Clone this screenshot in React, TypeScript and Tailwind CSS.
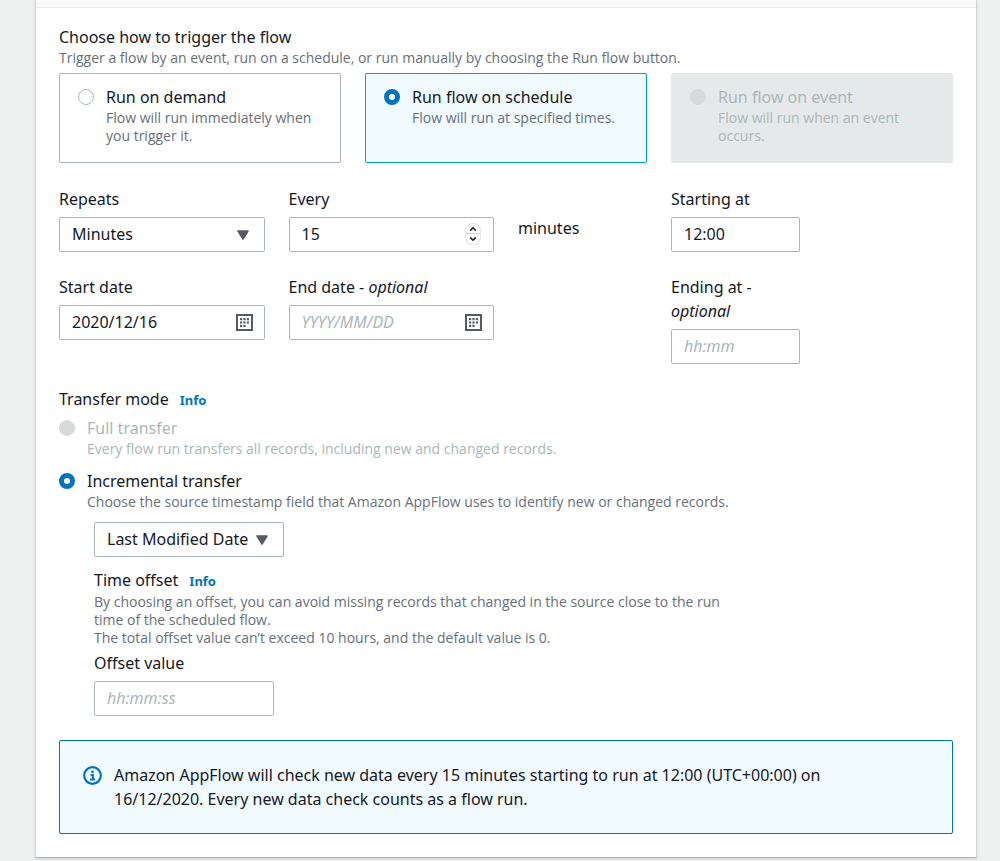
import React, { useState } from 'react';

const inputClass =
  'h-[35px] w-full min-w-0 rounded-xs border border-[#aab7b8] bg-white px-3 pb-0.5 text-[#16191f] outline-none placeholder:italic placeholder:text-[#aab7b8] focus:border-[#00a1c9]';

const hintClass = "font-['Open_Sans',sans-serif] text-sm leading-[18px]";

const CalendarIcon: React.FC = () => (
  <svg viewBox="0 0 17 17" className="h-[17px] w-[17px]" fill="none" aria-hidden="true">
    <rect x="1" y="1" width="15" height="15" stroke="#545b64" strokeWidth="2" />
    <path
      d="M4 4h2.2v2.2H4zM7.4 4h2.2v2.2H7.4zM10.8 4H13v2.2h-2.2zM4 7.4h2.2v2.2H4zM7.4 7.4h2.2v2.2H7.4zM10.8 7.4H13v2.2h-2.2zM4 10.8h2.2V13H4zM7.4 10.8h2.2V13H7.4z"
      fill="#545b64"
    />
  </svg>
);

const InfoIcon: React.FC = () => (
  <svg viewBox="0 0 16 16" className="h-[19px] w-[19px]" fill="none" stroke="#0073bb" aria-hidden="true">
    <circle cx="8" cy="8" r="7" strokeWidth="1.8" />
    <path d="M6 11.3h4.2M6.4 7.5h1.9v3.8" strokeWidth="1.7" />
    <path d="M7 4.9h2" strokeWidth="1.9" />
  </svg>
);

const InfoLink: React.FC = () => (
  <a href="#info" className="ml-[11px] text-[13px] font-bold text-[#0073bb] hover:underline">
    Info
  </a>
);

interface RadioProps extends React.InputHTMLAttributes<HTMLInputElement> {
  label: string;
  description: string;
}

const Radio: React.FC<RadioProps> = ({ label, description, disabled, ...props }) => (
  <label className="flex items-start">
    <input
      type="radio"
      disabled={disabled}
      className="mt-1 mr-3 h-4 w-4 shrink-0 appearance-none rounded-full border border-[#aab7b8] bg-white checked:border-5 checked:border-[#0073bb] disabled:border-[#d5dbdb] disabled:bg-[#d5dbdb]"
      {...props}
    />
    <span className={disabled ? 'text-[#aab7b8]' : 'text-[#16191f]'}>
      <span className="block">{label}</span>
      <span className={`block ${hintClass} ${disabled ? '' : 'text-[#687078]'}`}>{description}</span>
    </span>
  </label>
);

interface FieldProps {
  id: string;
  label: string;
  optional?: boolean;
  className?: string;
  children: React.ReactNode;
}

const Field: React.FC<FieldProps> = ({ id, label, optional, className, children }) => (
  <div className={className}>
    <label htmlFor={id} className="mb-1.5 block">
      {label}
      {optional && (
        <>
          {' - '}
          <i>optional</i>
        </>
      )}
    </label>
    {children}
  </div>
);

const Select: React.FC<React.SelectHTMLAttributes<HTMLSelectElement>> = (props) => (
  <div className="relative">
    <select className={`${inputClass} appearance-none`} {...props} />
    <svg
      viewBox="0 0 12 10"
      className="pointer-events-none absolute top-[13px] right-4 h-2.5 w-3"
      aria-hidden="true"
    >
      <path d="M1 1h10L6 9z" fill="#545b64" stroke="#545b64" strokeWidth="1.5" strokeLinejoin="round" />
    </svg>
  </div>
);

const DateInput: React.FC<React.InputHTMLAttributes<HTMLInputElement>> = (props) => (
  <div className="relative">
    <input type="text" className={inputClass} {...props} />
    <button type="button" aria-label="Open calendar" className="absolute top-[9px] right-3">
      <CalendarIcon />
    </button>
  </div>
);

const App: React.FC = () => {
  const [trigger, setTrigger] = useState('schedule');
  const [every, setEvery] = useState(15);
  const [startDate, setStartDate] = useState('2020/12/16');
  const [startTime, setStartTime] = useState('12:00');

  const triggers = [
    { id: 'demand', label: 'Run on demand', description: 'Flow will run immediately when you trigger it.' },
    { id: 'schedule', label: 'Run flow on schedule', description: 'Flow will run at specified times.' },
    { id: 'event', label: 'Run flow on event', description: 'Flow will run when an event occurs.', disabled: true },
  ];

  return (
    <div className="min-h-screen bg-[#eff1f1] pr-[23px] pb-[3px] pl-[35px] font-['Noto_Sans',sans-serif] text-base leading-6 text-[#16191f]">
      <main className="border-x border-b border-[#d0d6d6] border-b-[#aab7b8] bg-white shadow-sm">
        <div className="h-2 border-b border-[#eaeded] bg-[#fafafa]" />
        <form className="px-[23px] pt-[17px] pb-[23px]">
          <fieldset>
            <legend>Choose how to trigger the flow</legend>
            <p className={`mb-1.5 text-[#687078] ${hintClass}`}>
              Trigger a flow by an event, run on a schedule, or run manually by choosing the Run flow button.
            </p>
            <div className="grid grid-cols-3 gap-6">
              {triggers.map((item) => (
                <div
                  key={item.id}
                  className={`rounded-xs border px-[18px] pt-[11px] pb-[17px] ${
                    item.disabled
                      ? 'border-[#e6e9e9] bg-[#e6e9e9]'
                      : trigger === item.id
                        ? 'border-[#00a1c9] bg-[#f1faff]'
                        : 'border-[#aab7b8] bg-white'
                  }`}
                >
                  <Radio
                    name="trigger"
                    label={item.label}
                    description={item.description}
                    disabled={item.disabled}
                    checked={trigger === item.id}
                    onChange={() => setTrigger(item.id)}
                  />
                </div>
              ))}
            </div>
          </fieldset>

          <div className="mt-6 grid grid-cols-12 gap-x-6 gap-y-[23px]">
            <Field id="repeats" label="Repeats" className="col-span-3">
              <Select id="repeats" defaultValue="Minutes">
                <option>Minutes</option>
                <option>Hours</option>
                <option>Days</option>
              </Select>
            </Field>
            <Field id="every" label="Every" className="col-span-3">
              <div className="relative">
                <input
                  id="every"
                  type="number"
                  value={every}
                  onChange={(e) => setEvery(Number(e.target.value))}
                  className={`${inputClass} [appearance:textfield]`}
                />
                <div className="absolute top-[7px] right-3.5 flex w-3.5 flex-col divide-y divide-gray-300 rounded-md bg-white shadow-[0_0_2px_rgba(0,0,0,0.35)]">
                  <button type="button" aria-label="Increase" className="h-2.5" onClick={() => setEvery(every + 1)}>
                    <svg viewBox="0 0 14 10" className="h-2.5 w-3.5" fill="none" stroke="#222" strokeWidth="1.6">
                      <path d="M4.2 6.6L7 3.8l2.8 2.8" />
                    </svg>
                  </button>
                  <button type="button" aria-label="Decrease" className="h-2.5" onClick={() => setEvery(every - 1)}>
                    <svg viewBox="0 0 14 10" className="h-2.5 w-3.5" fill="none" stroke="#222" strokeWidth="1.6">
                      <path d="M4.2 3.4L7 6.2l2.8-2.8" />
                    </svg>
                  </button>
                </div>
              </div>
            </Field>
            <div className="col-span-2 pt-[29px]">minutes</div>
            <Field id="start-time" label="Starting at" className="col-span-2">
              <input
                id="start-time"
                type="text"
                value={startTime}
                onChange={(e) => setStartTime(e.target.value)}
                className={inputClass}
              />
            </Field>

            <Field id="start-date" label="Start date" className="col-span-3 col-start-1">
              <DateInput id="start-date" value={startDate} onChange={(e) => setStartDate(e.target.value)} />
            </Field>
            <Field id="end-date" label="End date" optional className="col-span-3">
              <DateInput id="end-date" placeholder="YYYY/MM/DD" />
            </Field>
            <Field id="end-time" label="Ending at" optional className="col-span-2 col-start-9">
              <input id="end-time" type="text" placeholder="hh:mm" className={inputClass} />
            </Field>
          </div>

          <fieldset className="mt-[23px]">
            <legend>
              Transfer mode
              <InfoLink />
            </legend>
            <div className="mt-1 flex flex-col gap-[11px]">
              <Radio
                name="transfer"
                label="Full transfer"
                description="Every flow run transfers all records, including new and changed records."
                disabled
              />
              <Radio
                name="transfer"
                label="Incremental transfer"
                description="Choose the source timestamp field that Amazon AppFlow uses to identify new or changed records."
                defaultChecked
              />
            </div>
          </fieldset>

          <div className="mt-[11px] ml-[35px]">
            <div className="w-[190px]">
              <Select aria-label="Source timestamp field" defaultValue="Last Modified Date">
                <option>Last Modified Date</option>
                <option>Created Date</option>
              </Select>
            </div>
            <h3 className="mt-[11px]">
              Time offset
              <InfoLink />
            </h3>
            <p className={`max-w-[630px] text-[#687078] ${hintClass}`}>
              By choosing an offset, you can avoid missing records that changed in the source close to the run
              <br />
              time of the scheduled flow.
              <br />
              The total offset value can’t exceed 10 hours, and the default value is 0.
            </p>
            <Field id="offset" label="Offset value" className="mt-1 w-[180px]">
              <input id="offset" type="text" placeholder="hh:mm:ss" className={inputClass} />
            </Field>
          </div>

          <div className="mt-6 flex items-start rounded-xs border border-[#0073bb] bg-[#f1faff] px-[23px] py-[22px]">
            <span className="mt-[3px] mr-3 shrink-0">
              <InfoIcon />
            </span>
            <p className="max-w-[740px]">
              {`Amazon AppFlow will check new data every ${every} minutes starting to run at ${startTime} (UTC+00:00) on 16/12/2020. Every new data check counts as a flow run.`}
            </p>
          </div>
        </form>
      </main>
    </div>
  );
};

export default App;
